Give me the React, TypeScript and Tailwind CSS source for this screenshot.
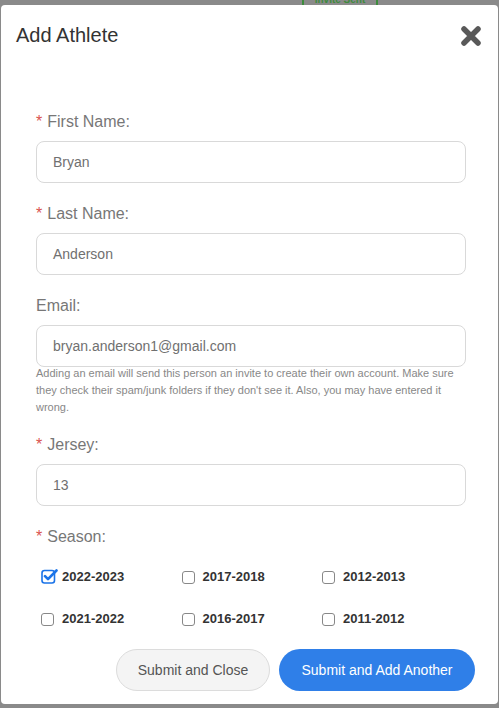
import { useState } from 'react'

const SEASONS = [
  ['2022-2023', '2017-2018', '2012-2013'],
  ['2021-2022', '2016-2017', '2011-2012'],
]

function Field({ label, value, required = true }: { label: string; value: string; required?: boolean }) {
  return (
    <div className="flex flex-col">
      <label className="h-[18px] text-[16px] leading-[18px] text-[#777]">
        {required && <span className="text-[#d9534f] mr-[5px]">*</span>}
        {label}
      </label>
      <div className="mt-[10px] h-[42px] w-[430px] rounded-[8px] border border-[#d9d9d9] bg-white flex items-center px-[16px] text-[14px] text-[#707070]">
        {value}
      </div>
    </div>
  )
}

function CheckedBox() {
  return (
    <svg width="17" height="16" viewBox="0 0 17 16" className="shrink-0">
      <rect x="1" y="2.5" width="12.5" height="12.5" rx="2.5" fill="none" stroke="#1a73e8" strokeWidth="1.6" />
      <path d="M4 8.2 L7 11.2 L15.5 2.5" fill="none" stroke="#1a73e8" strokeWidth="2.6" strokeLinecap="round" strokeLinejoin="round" />
    </svg>
  )
}

export default function App() {
  const [checked] = useState<string[]>(['2022-2023'])

  return (
    <div className="w-[499px] h-[708px] bg-[#8a8a8a] overflow-hidden" style={{ fontFamily: '"Liberation Sans", Arial, sans-serif' }}>
      <div className="h-[5px] overflow-hidden">
        <div className="ml-[302px] w-[76px] h-[12px] -mt-[6px] border-x-2 border-[#3d8b3d] text-[10px] text-center text-[#3d8b3d] font-bold leading-[11px]">
          Invite Sent
        </div>
      </div>
      <div className="mx-[1px] h-[699px] bg-white rounded-[4px] flex flex-col">
        <div className="flex items-start justify-between pl-[15px] pr-[16px] pt-[18px]">
          <h2 className="text-[20px] leading-[24px] text-[#333]">Add Athlete</h2>
          <svg width="22" height="22" viewBox="0 0 22 22" className="mt-[2px]">
            <path d="M4 4 L18 18 M18 4 L4 18" stroke="#595959" strokeWidth="5.5" strokeLinecap="round" />
          </svg>
        </div>

        <div className="flex flex-col pl-[35px] pt-[66px]">
          <Field label="First Name:" value="Bryan" />
          <div className="mt-[22px]">
            <Field label="Last Name:" value="Anderson" />
          </div>
          <div className="mt-[22px]">
            <Field label="Email:" value="bryan.anderson1@gmail.com" required={false} />
          </div>
          <p className="mt-[-2px] w-[432px] text-[11px] leading-[17px] text-[#888]">
            Adding an email will send this person an invite to create their own account. Make sure they check their spam/junk folders if they don't see it. Also, you may have entered it wrong.
          </p>
          <div className="mt-[20px]">
            <Field label="Jersey:" value="13" />
          </div>
          <div className="mt-[22px] h-[18px] text-[16px] leading-[18px] text-[#777]">
            <span className="text-[#d9534f] mr-[5px]">*</span>
            Season:
          </div>
          <div className="mt-[22px] flex flex-col gap-[24px] pl-[5px]">
            {SEASONS.map((row, i) => (
              <div key={i} className="flex h-[18px]">
                {row.map((s) => (
                  <div key={s} className="w-[140.5px] flex items-center">
                    {checked.includes(s) ? (
                      <div className="w-[13px] h-[16px] mr-[8px] -mt-[2px] flex items-end">
                        <CheckedBox />
                      </div>
                    ) : (
                      <div className="w-[13px] h-[13px] mr-[8px] rounded-[3px] border border-[#888] bg-white" />
                    )}
                    <span className="text-[13px] font-bold text-[#333]">{s}</span>
                  </div>
                ))}
              </div>
            ))}
          </div>
        </div>

        <div className="mt-[21px] flex justify-end gap-[9px] pr-[23px]">
          <button className="h-[42px] w-[154px] rounded-full border border-[#dcdcdc] bg-[#f4f4f4] text-[14px] text-[#555]">
            Submit and Close
          </button>
          <button className="h-[42px] w-[196px] rounded-full bg-[#2f7fe8] text-[14px] text-white">
            Submit and Add Another
          </button>
        </div>
      </div>
    </div>
  )
}
